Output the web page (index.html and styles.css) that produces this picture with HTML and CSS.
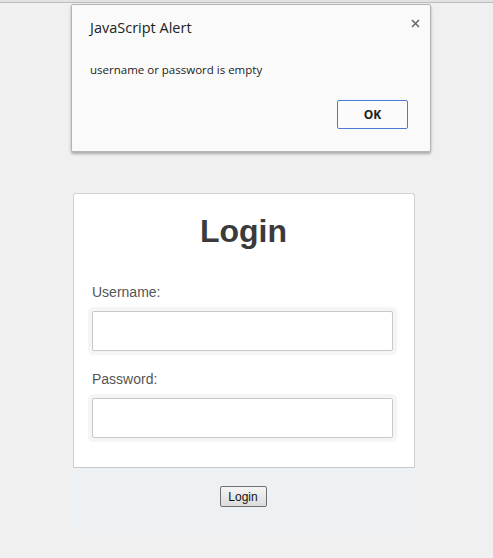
FILE: index.html
```html
<!DOCTYPE html>
<html>
<head>
<meta charset="utf-8">
<link rel="stylesheet" href="styles.css">
</head>
<body>
<div class="topbar"></div>
<div class="card">
  <div class="card-body">
    <h1 class="title">Login</h1>
    <label class="label" for="u">Username:</label>
    <input class="field" id="u" type="text">
    <label class="label label-pw" for="p">Password:</label>
    <input class="field" id="p" type="password">
  </div>
  <div class="card-foot">
    <button class="btn">Login</button>
  </div>
</div>
<div class="alert">
  <div class="alert-head">
    <span class="alert-title">JavaScript Alert</span>
    <svg class="alert-close" width="9" height="9" viewBox="0 0 9 9"><path d="M1 1 L8 8 M8 1 L1 8" stroke="#6a6a6a" stroke-width="1.6"/></svg>
  </div>
  <div class="alert-msg">username or password is empty</div>
  <div class="alert-actions"><button class="ok">OK</button></div>
</div>
</body>
</html>
```
FILE: styles.css
```css
html, body {
  margin: 0;
  padding: 0;
}
body {
  background: #f0f0f0;
  width: 493px;
  height: 558px;
  position: relative;
  overflow: hidden;
  font-family: "Liberation Sans", Arial, sans-serif;
}
.topbar {
  height: 2px;
  background: #e2e2e2;
  border-bottom: 1px solid #bcbcbc;
}
.card {
  margin: 190px 0 0 73px;
  width: 342px;
}
.card-body {
  background: #fff;
  border: 1px solid #d2d2d2;
  border-bottom: 1px solid #c9c9c9;
  border-radius: 3px 3px 0 0;
  padding: 19px 21px 29px 18px;
  display: flex;
  flex-direction: column;
}
.title {
  margin: 0;
  text-align: center;
  font-size: 32px;
  line-height: 37px;
  font-weight: bold;
  color: #3b3b3b;
  padding-left: 2px;
}
.label {
  margin-top: 34px;
  font-size: 14px;
  line-height: 16px;
  color: #555;
}
.label-pw {
  margin-top: 20px;
}
.field {
  box-sizing: border-box;
  margin: 11px 0 0 0;
  height: 40px;
  width: 301px;
  border: 1px solid #c9c9c9;
  border-radius: 2px;
  background: #fff;
  box-shadow: 0 0 0 4px #f3f5f7;
  outline: none;
}
.card-foot {
  background: #edf1f4;
  height: 67px;
  padding: 18px 2px 0 0;
  box-sizing: border-box;
  display: flex;
  justify-content: center;
  align-items: flex-start;
}
.btn {
  width: 47px;
  height: 21px;
  padding: 0;
  border: 1px solid #707070;
  border-radius: 2px;
  background: linear-gradient(#f5f5f5, #dcdcdc);
  font-family: "Liberation Sans", Arial, sans-serif;
  font-size: 12px;
  color: #111;
}
.alert {
  position: absolute;
  left: 71px;
  top: 4px;
  width: 360px;
  height: 148px;
  box-sizing: border-box;
  background: #fafafa;
  border: 1px solid #b4b4b4;
  border-radius: 2px;
  box-shadow: 0 2px 3px rgba(0,0,0,0.3);
  font-family: "Open Sans", "Noto Sans", sans-serif;
}
.alert-head {
  display: flex;
  justify-content: space-between;
  padding: 13px 10px 0 18px;
}
.alert-title {
  font-size: 14.5px;
  line-height: 20px;
  color: #222;
}
.alert-close {
  margin-top: 1px;
}
.alert-msg {
  margin: 24px 0 0 18px;
  font-size: 11.5px;
  line-height: 16px;
  color: #222;
}
.alert-actions {
  display: flex;
  justify-content: flex-end;
  padding: 22px 22px 0 0;
}
.ok {
  width: 71px;
  height: 29px;
  box-sizing: border-box;
  border: 1px solid #4a7ad2;
  border-radius: 2px;
  background: #fbfbfb;
  font-family: "Open Sans", "Noto Sans", sans-serif;
  font-weight: bold;
  font-size: 12px;
  color: #222;
}
```
